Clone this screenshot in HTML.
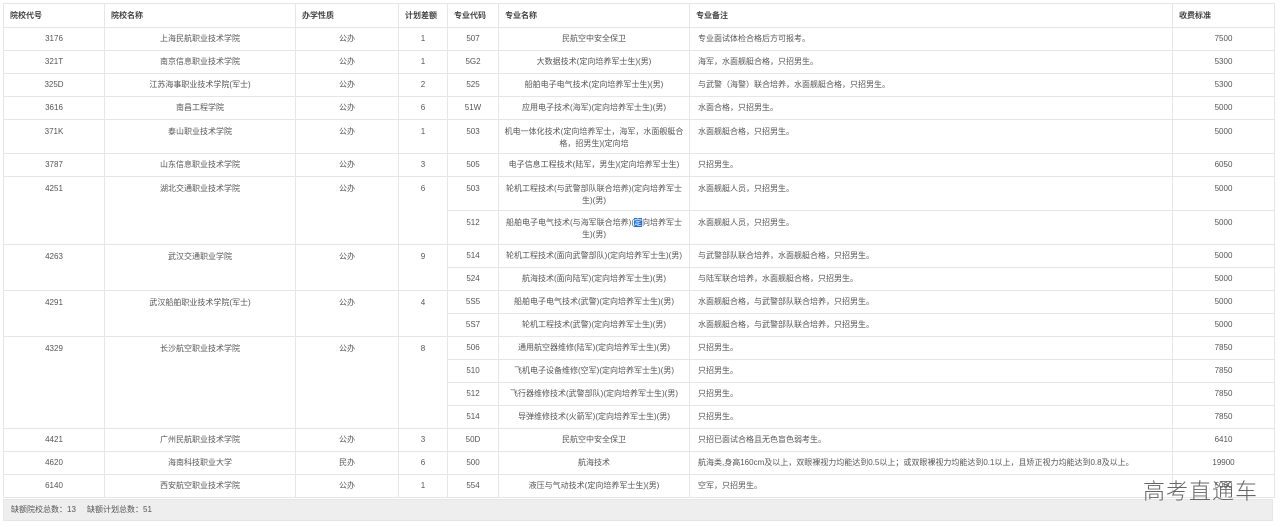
<!DOCTYPE html>
<html><head><meta charset="utf-8"><style>
body{margin:0;background:#fff;width:1280px;height:527px;overflow:hidden;font-family:"Liberation Sans","Noto Sans CJK SC",sans-serif;font-size:8px;color:#555;position:relative}
table{position:absolute;left:3px;top:3px;border-collapse:collapse;table-layout:fixed;width:1271px}
td,th{border:1px solid #e6e6e6;padding:0 4px;text-align:center;line-height:11.5px;overflow:hidden}
th{text-align:left;font-weight:bold;color:#444;height:23px;padding:0 6px}
td.l{text-align:left;padding-left:8px}
tr{height:23px}
.t{height:34px}
.foot{position:absolute;left:3px;top:499px;width:1270px;height:22px;background:#eeeeee;border:1px solid #e6e6e6;box-sizing:border-box;line-height:20px;padding-left:7px;font-size:8px;color:#555}
.wm{position:absolute;left:1143px;top:474px;font-size:22px;color:#666;font-family:"Noto Sans CJK SC",sans-serif;font-weight:300;letter-spacing:1px}
</style></head><body>
<table>
<colgroup><col style="width:101px"><col style="width:191px"><col style="width:103px"><col style="width:49px"><col style="width:51px"><col style="width:191px"><col style="width:483px"><col style="width:102px"></colgroup>
<tr><th>院校代号</th><th>院校名称</th><th>办学性质</th><th>计划差额</th><th>专业代码</th><th>专业名称</th><th>专业备注</th><th>收费标准</th></tr>
<tr><td>3176</td><td>上海民航职业技术学院</td><td>公办</td><td>1</td><td>507</td><td>民航空中安全保卫</td><td class="l">专业面试体检合格后方可报考。</td><td>7500</td></tr>
<tr><td>321T</td><td>南京信息职业技术学院</td><td>公办</td><td>1</td><td>5G2</td><td>大数据技术(定向培养军士生)(男)</td><td class="l">海军，水面舰艇合格，只招男生。</td><td>5300</td></tr>
<tr><td>325D</td><td>江苏海事职业技术学院(军士)</td><td>公办</td><td>2</td><td>525</td><td>船舶电子电气技术(定向培养军士生)(男)</td><td class="l">与武警（海警）联合培养，水面舰艇合格，只招男生。</td><td>5300</td></tr>
<tr><td>3616</td><td>南昌工程学院</td><td>公办</td><td>6</td><td>51W</td><td>应用电子技术(海军)(定向培养军士生)(男)</td><td class="l">水面合格，只招男生。</td><td>5000</td></tr>
<tr class="t" style="vertical-align:top"><td style="padding-top:6px">371K</td><td style="padding-top:6px">泰山职业技术学院</td><td style="padding-top:6px">公办</td><td style="padding-top:6px">1</td><td style="padding-top:6px">503</td><td style="padding-top:6px">机电一体化技术(定向培养军士，海军，水面舰艇合格，招男生)(定向培</td><td class="l" style="padding-top:6px">水面舰艇合格，只招男生。</td><td style="padding-top:6px">5000</td></tr>
<tr><td>3787</td><td>山东信息职业技术学院</td><td>公办</td><td>3</td><td>505</td><td style="white-space:nowrap">电子信息工程技术(陆军，男生)(定向培养军士生)</td><td class="l">只招男生。</td><td>6050</td></tr>
<tr class="t" style="vertical-align:top"><td rowspan="2" style="padding-top:6px">4251</td><td rowspan="2" style="padding-top:6px">湖北交通职业技术学院</td><td rowspan="2" style="padding-top:6px">公办</td><td rowspan="2" style="padding-top:6px">6</td><td style="padding-top:6px">503</td><td style="padding-top:6px">轮机工程技术(与武警部队联合培养)(定向培养军士生)(男)</td><td class="l" style="padding-top:6px">水面舰艇人员，只招男生。</td><td style="padding-top:6px">5000</td></tr>
<tr class="t" style="vertical-align:top"><td style="padding-top:6px">512</td><td style="padding-top:6px">船舶电子电气技术(与海军联合培养)(<span style="background:#1e6fd9;color:#fff">定</span>向培养军士生)(男)</td><td class="l" style="padding-top:6px">水面舰艇人员，只招男生。</td><td style="padding-top:6px">5000</td></tr>
<tr style="vertical-align:top"><td rowspan="2" style="padding-top:6px">4263</td><td rowspan="2" style="padding-top:6px">武汉交通职业学院</td><td rowspan="2" style="padding-top:6px">公办</td><td rowspan="2" style="padding-top:6px">9</td><td style="vertical-align:middle">514</td><td style="vertical-align:middle;white-space:nowrap">轮机工程技术(面向武警部队)(定向培养军士生)(男)</td><td class="l" style="vertical-align:middle">与武警部队联合培养，水面舰艇合格，只招男生。</td><td style="vertical-align:middle">5000</td></tr>
<tr><td>524</td><td>航海技术(面向陆军)(定向培养军士生)(男)</td><td class="l">与陆军联合培养，水面舰艇合格，只招男生。</td><td>5000</td></tr>
<tr style="vertical-align:top"><td rowspan="2" style="padding-top:6px">4291</td><td rowspan="2" style="padding-top:6px">武汉船舶职业技术学院(军士)</td><td rowspan="2" style="padding-top:6px">公办</td><td rowspan="2" style="padding-top:6px">4</td><td style="vertical-align:middle">5S5</td><td style="vertical-align:middle">船舶电子电气技术(武警)(定向培养军士生)(男)</td><td class="l" style="vertical-align:middle">水面舰艇合格，与武警部队联合培养，只招男生。</td><td style="vertical-align:middle">5000</td></tr>
<tr><td>5S7</td><td>轮机工程技术(武警)(定向培养军士生)(男)</td><td class="l">水面舰艇合格，与武警部队联合培养，只招男生。</td><td>5000</td></tr>
<tr style="vertical-align:top"><td rowspan="4" style="padding-top:6px">4329</td><td rowspan="4" style="padding-top:6px">长沙航空职业技术学院</td><td rowspan="4" style="padding-top:6px">公办</td><td rowspan="4" style="padding-top:6px">8</td><td style="vertical-align:middle">506</td><td style="vertical-align:middle">通用航空器维修(陆军)(定向培养军士生)(男)</td><td class="l" style="vertical-align:middle">只招男生。</td><td style="vertical-align:middle">7850</td></tr>
<tr><td>510</td><td>飞机电子设备维修(空军)(定向培养军士生)(男)</td><td class="l">只招男生。</td><td>7850</td></tr>
<tr><td>512</td><td style="white-space:nowrap">飞行器维修技术(武警部队)(定向培养军士生)(男)</td><td class="l">只招男生。</td><td>7850</td></tr>
<tr><td>514</td><td>导弹维修技术(火箭军)(定向培养军士生)(男)</td><td class="l">只招男生。</td><td>7850</td></tr>
<tr><td>4421</td><td>广州民航职业技术学院</td><td>公办</td><td>3</td><td>50D</td><td>民航空中安全保卫</td><td class="l">只招已面试合格且无色盲色弱考生。</td><td>6410</td></tr>
<tr><td>4620</td><td>海南科技职业大学</td><td>民办</td><td>6</td><td>500</td><td>航海技术</td><td class="l" style="white-space:nowrap">航海类,身高160cm及以上，双眼裸视力均能达到0.5以上；或双眼裸视力均能达到0.1以上，且矫正视力均能达到0.8及以上。</td><td>19900</td></tr>
<tr><td>6140</td><td>西安航空职业技术学院</td><td>公办</td><td>1</td><td>554</td><td>液压与气动技术(定向培养军士生)(男)</td><td class="l">空军，只招男生。</td><td>5000</td></tr>
</table>
<div class="foot">缺额院校总数：13&nbsp;&nbsp;&nbsp;&nbsp;&nbsp;缺额计划总数：51</div>
<div class="wm">高考直通车</div>
</body></html>
